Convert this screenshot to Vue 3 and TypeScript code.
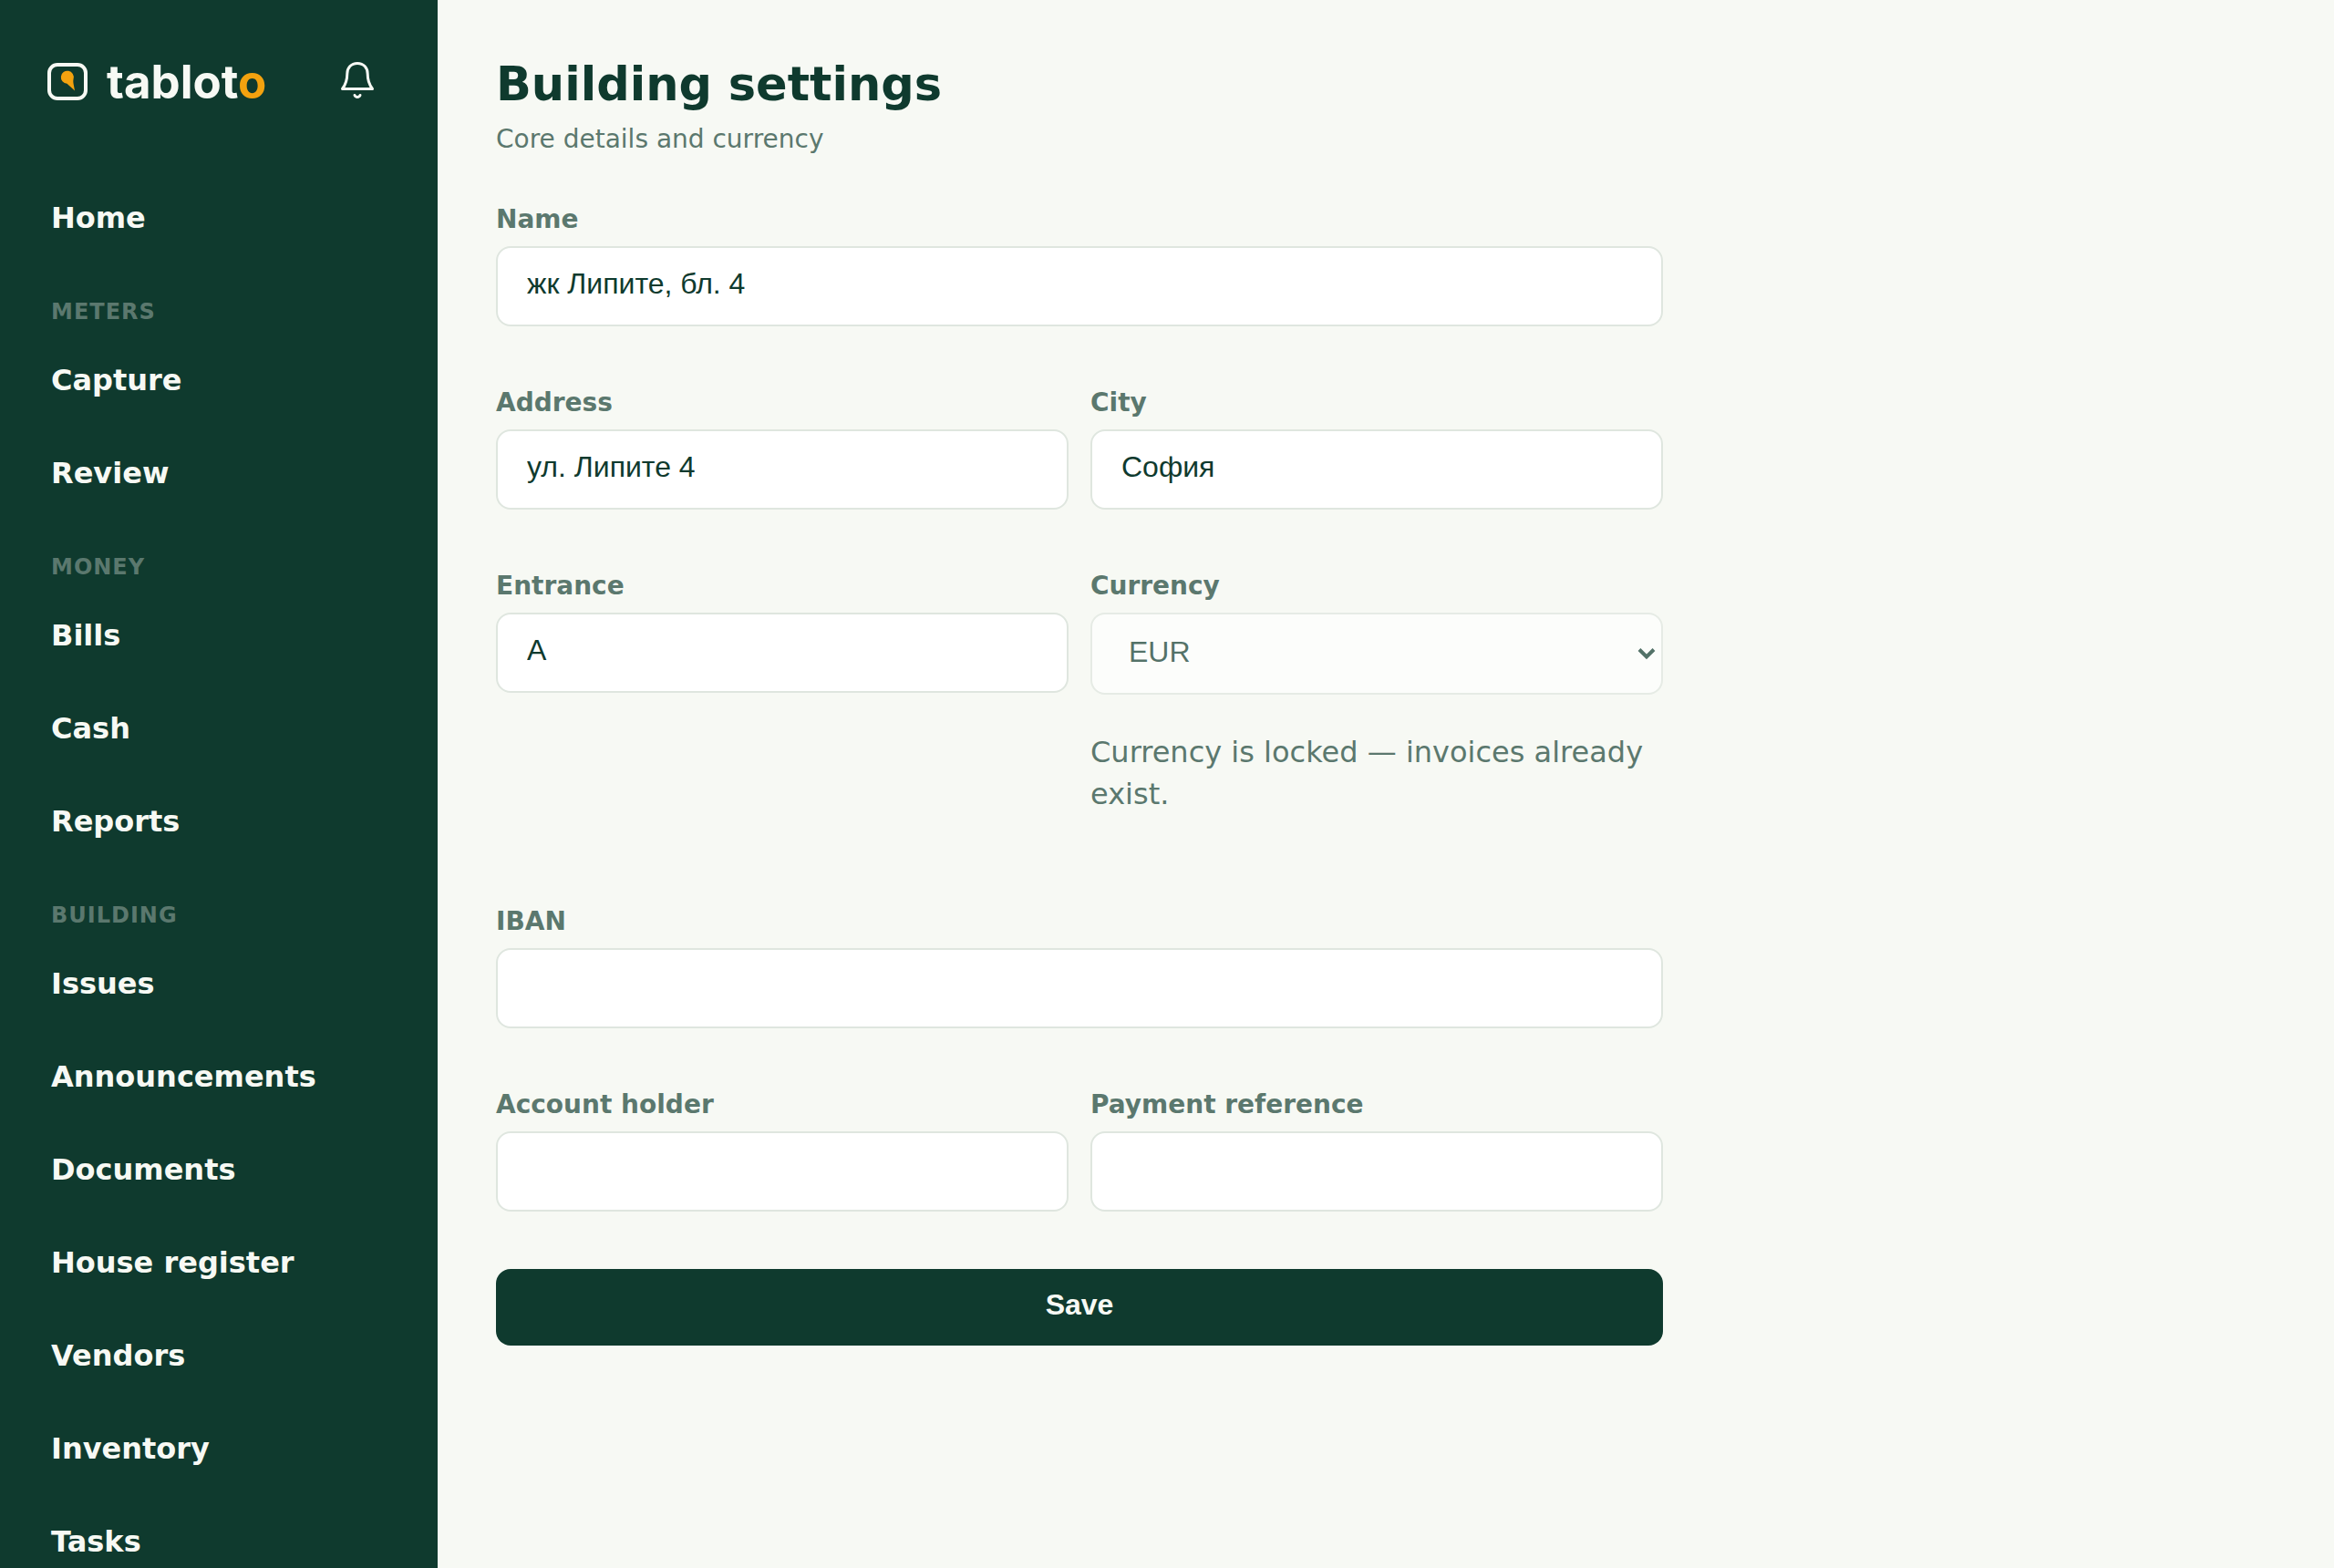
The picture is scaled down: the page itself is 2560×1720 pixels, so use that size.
<script setup lang="ts">
import { reactive } from 'vue'

interface NavGroup {
  title?: string
  items: string[]
}

const groups: NavGroup[] = [
  { items: ['Home'] },
  { title: 'Meters', items: ['Capture', 'Review'] },
  { title: 'Money', items: ['Bills', 'Cash', 'Reports'] },
  {
    title: 'Building',
    items: ['Issues', 'Announcements', 'Documents', 'House register', 'Vendors', 'Inventory', 'Tasks'],
  },
]

const form = reactive({
  name: 'жк Липите, бл. 4',
  address: 'ул. Липите 4',
  city: 'София',
  entrance: 'А',
  currency: 'EUR',
  iban: '',
  holder: '',
  reference: '',
})
</script>

<template>
  <div class="shell">
    <aside class="sidebar">
      <header class="brand-row">
        <a class="brand" href="#">
          <svg class="mark" viewBox="0 0 44 42" width="44" height="42" aria-hidden="true">
            <rect x="2" y="2" width="40" height="37" rx="9" fill="none" stroke="#f7f9f4" stroke-width="4" />
            <path
              d="M30 30.500L21.500 22.700A7 7 0 1 1 28.600 17.500C28 20 28.500 22 28.800 24Z"
              fill="#f3a20f"
            />
          </svg>
          <span class="wordmark">tablot<span class="accent">o</span></span>
        </a>
        <button class="bell" type="button" aria-label="Notifications">
          <svg viewBox="0 1 40 42" width="40" height="42" fill="none" stroke="currentColor" stroke-width="3" stroke-linecap="round" stroke-linejoin="round" aria-hidden="true">
            <path d="M20 3.500C13 3.500 8.800 8.500 8.800 15C8.800 23 7 27 3.500 31.500H36.500C33 27 31.200 23 31.200 15C31.200 8.500 27 3.500 20 3.500Z" />
            <path d="M17 38.500C18 41 22 41 23 38.500" />
          </svg>
        </button>
      </header>
      <nav class="nav" aria-label="Main">
        <template v-for="(group, i) in groups" :key="i">
          <h2 v-if="group.title" class="group-title">{{ group.title }}</h2>
          <a v-for="item in group.items" :key="item" class="nav-link" href="#">{{ item }}</a>
        </template>
      </nav>
    </aside>

    <main class="main">
      <h1 class="title">Building settings</h1>
      <p class="subtitle">Core details and currency</p>

      <form class="form" @submit.prevent>
        <div class="field">
          <label for="name">Name</label>
          <input id="name" v-model="form.name" class="control" type="text" />
        </div>
        <div class="row">
          <div class="field">
            <label for="address">Address</label>
            <input id="address" v-model="form.address" class="control" type="text" />
          </div>
          <div class="field">
            <label for="city">City</label>
            <input id="city" v-model="form.city" class="control" type="text" />
          </div>
        </div>
        <div class="row">
          <div class="field">
            <label for="entrance">Entrance</label>
            <input id="entrance" v-model="form.entrance" class="control" type="text" />
          </div>
          <div class="field">
            <label for="currency">Currency</label>
            <div class="select-wrap">
              <select id="currency" v-model="form.currency" class="control select" disabled>
                <option value="EUR">EUR</option>
              </select>
              <svg class="chevron" viewBox="0 0 20 14" width="20" height="14" aria-hidden="true">
                <path d="M2 2.500L10 10.500L18 2.500" fill="none" stroke="currentColor" stroke-width="4" />
              </svg>
            </div>
            <p class="hint">Currency is locked — invoices already exist.</p>
          </div>
        </div>
        <div class="field">
          <label for="iban">IBAN</label>
          <input id="iban" v-model="form.iban" class="control" type="text" />
        </div>
        <div class="row">
          <div class="field">
            <label for="holder">Account holder</label>
            <input id="holder" v-model="form.holder" class="control" type="text" />
          </div>
          <div class="field">
            <label for="reference">Payment reference</label>
            <input id="reference" v-model="form.reference" class="control" type="text" />
          </div>
        </div>
        <button class="save" type="submit">Save</button>
      </form>
    </main>
  </div>
</template>

<style>
body {
  margin: 0;
  background: #f7f9f4;
}
</style>

<style scoped>
.shell {
  display: flex;
  min-height: 100vh;
  background: #f7f9f4;
  color: #0f3a2e;
  font-family: "DejaVu Sans", sans-serif;
}
.sidebar {
  box-sizing: border-box;
  flex: 0 0 480px;
  height: 100vh;
  overflow: hidden;
  padding: 48px 32px 0;
  background: #0f3a2e;
  color: #f7f9f4;
}
.brand-row {
  display: flex;
  align-items: center;
  justify-content: space-between;
  height: 80px;
  padding: 0 16px 0 20px;
}
.brand {
  display: flex;
  align-items: center;
  gap: 21px;
  padding-top: 4px;
  color: inherit;
  text-decoration: none;
}
.wordmark {
  font: 700 51px/58px "Inter", sans-serif;
}
.accent {
  color: #f3a20f;
}
.bell {
  display: flex;
  align-items: center;
  justify-content: center;
  width: 80px;
  height: 80px;
  padding: 0;
  border: 0;
  background: none;
  color: inherit;
}
.nav {
  display: flex;
  flex-direction: column;
  gap: 8px;
  margin-top: 64px;
}
.nav-link {
  flex: none;
  padding: 24px;
  color: inherit;
  font-size: 32px;
  font-weight: 700;
  line-height: 46px;
  text-decoration: none;
}
.group-title {
  flex: none;
  margin: 0;
  padding: 32px 24px 4px;
  color: #5b786e;
  font-size: 24px;
  font-weight: 700;
  line-height: 32px;
  letter-spacing: 1px;
  text-transform: uppercase;
}
.main {
  flex: 1;
  min-width: 0;
  padding: 60px 64px;
}
.title {
  margin: 0;
  font-size: 51px;
  font-weight: 700;
  line-height: 66px;
}
.subtitle {
  margin: 6px 0 0;
  color: #5b786e;
  font-size: 28px;
  line-height: 42px;
}
.form {
  display: flex;
  flex-direction: column;
  gap: 63px;
  max-width: 1280px;
  margin-top: 46px;
}
.row {
  display: grid;
  grid-template-columns: 1fr 1fr;
  gap: 24px;
}
.field {
  display: flex;
  flex-direction: column;
  min-width: 0;
}
label {
  margin-bottom: 8px;
  color: #5b786e;
  font-size: 28px;
  font-weight: 700;
  line-height: 42px;
}
.control {
  box-sizing: border-box;
  width: 100%;
  height: 88px;
  margin: 0;
  padding: 18px 32px 24px;
  border: 2px solid #dfe6df;
  border-radius: 16px;
  background: #ffffff;
  color: #0f3a2e;
  font: 32px "Liberation Sans", sans-serif;
}
.select-wrap {
  position: relative;
  opacity: 0.7;
}
.select {
  display: block;
  height: 90px;
  padding: 20px 40px 24px;
  appearance: none;
  opacity: 1;
}
.chevron {
  position: absolute;
  top: 38px;
  right: 8px;
}
.hint {
  margin: 40px 0 33px;
  color: #5b786e;
  font-size: 32px;
  line-height: 46px;
}
.save {
  height: 84px;
  padding: 18px 32px 24px;
  border: 0;
  border-radius: 16px;
  background: #0f3a2e;
  color: #f7f9f4;
  font: 700 32px "Liberation Sans", sans-serif;
}
</style>
